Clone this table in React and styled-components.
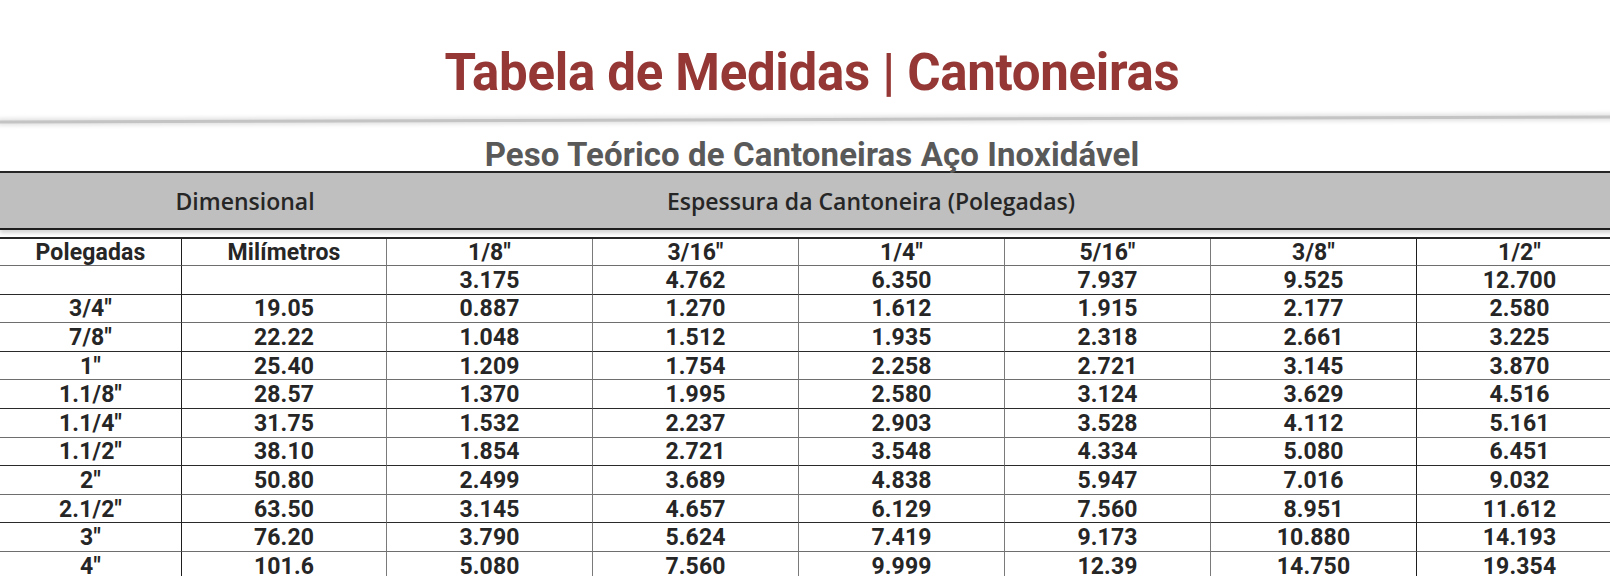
import React from "react";
import styled, { createGlobalStyle } from "styled-components";

const GlobalStyle = createGlobalStyle`
  html, body {
    margin: 0;
    padding: 0;
    background: #ffffff;
    overflow: hidden;
  }
`;

const Page = styled.div`
  width: 1624px;
  font-family: Roboto, "Liberation Sans", sans-serif;
`;

const Title = styled.h1`
  margin: 0;
  padding-top: 46px;
  height: 53px;
  line-height: 53px;
  font-size: 51px;
  letter-spacing: -0.3px;
  font-weight: 700;
  color: #953735;
  text-align: center;
`;

const Rule = styled.div`
  margin-top: 19px;
  height: 3px;
  background: #c4c4c4;
  box-shadow: 0 0 4px 2px rgba(0, 0, 0, 0.12);
  transform: rotate(-0.18deg);
`;

const Subtitle = styled.h2`
  margin: 17px 0 0;
  height: 33px;
  line-height: 33px;
  font-size: 33px;
  letter-spacing: 0.1px;
  font-weight: 700;
  color: #595959;
  text-align: center;
`;

const Band = styled.div`
  height: 55px;
  display: grid;
  grid-template-columns: 490px 762px 1fr;
  align-items: center;
  background: #bfbfbf;
  border-top: 2px solid #262626;
  border-bottom: 2px solid #1e1e1e;
  box-shadow: 0 3px 4px rgba(0, 0, 0, 0.18);
  font-family: "Open Sans", "Noto Sans", sans-serif;
  font-weight: 600;
  font-size: 23px;
  color: #262626;
`;

const BandLabel = styled.span`
  text-align: center;
`;

const Grid = styled.div`
  margin-top: 7px;
  display: grid;
  grid-template-columns: 182px 205px repeat(6, 206px);
  grid-template-rows: 27px;
  grid-auto-rows: 28.6px;
  border-top: 2px solid #262626;
`;

const Cell = styled.div`
  box-sizing: border-box;
  display: flex;
  align-items: center;
  justify-content: center;
  padding-top: 1px;
  border-bottom: 1px solid ${(p) => (p.$dark ? "#2a2a2a" : "#6e6e6e")};
  border-right: 1px solid ${(p) => (p.$edge ? "#1e1e1e" : "#7a7a7a")};
  font-size: 23px;
  letter-spacing: 0.15px;
  font-weight: 700;
  color: #262626;
  white-space: nowrap;
`;

const rows = [
  ["Polegadas", "Milímetros", '1/8"', '3/16"', '1/4"', '5/16"', '3/8"', '1/2"'],
  ["", "", "3.175", "4.762", "6.350", "7.937", "9.525", "12.700"],
  ['3/4"', "19.05", "0.887", "1.270", "1.612", "1.915", "2.177", "2.580"],
  ['7/8"', "22.22", "1.048", "1.512", "1.935", "2.318", "2.661", "3.225"],
  ['1"', "25.40", "1.209", "1.754", "2.258", "2.721", "3.145", "3.870"],
  ['1.1/8"', "28.57", "1.370", "1.995", "2.580", "3.124", "3.629", "4.516"],
  ['1.1/4"', "31.75", "1.532", "2.237", "2.903", "3.528", "4.112", "5.161"],
  ['1.1/2"', "38.10", "1.854", "2.721", "3.548", "4.334", "5.080", "6.451"],
  ['2"', "50.80", "2.499", "3.689", "4.838", "5.947", "7.016", "9.032"],
  ['2.1/2"', "63.50", "3.145", "4.657", "6.129", "7.560", "8.951", "11.612"],
  ['3"', "76.20", "3.790", "5.624", "7.419", "9.173", "10.880", "14.193"],
  ['4"', "101.6", "5.080", "7.560", "9.999", "12.39", "14.750", "19.354"],
];

export default function App() {
  return (
    <Page>
      <GlobalStyle />
      <Title>Tabela de Medidas | Cantoneiras</Title>
      <Rule />
      <Subtitle>Peso Teórico de Cantoneiras Aço Inoxidável</Subtitle>
      <Band>
        <BandLabel>Dimensional</BandLabel>
        <BandLabel>Espessura da Cantoneira (Polegadas)</BandLabel>
      </Band>
      <Grid>
        {rows.map((row, r) =>
          row.map((value, c) => (
            <Cell key={`${r}-${c}`} $dark={r % 2 === 1} $edge={c === 0 || c === 6}>
              {value}
            </Cell>
          ))
        )}
      </Grid>
    </Page>
  );
}
